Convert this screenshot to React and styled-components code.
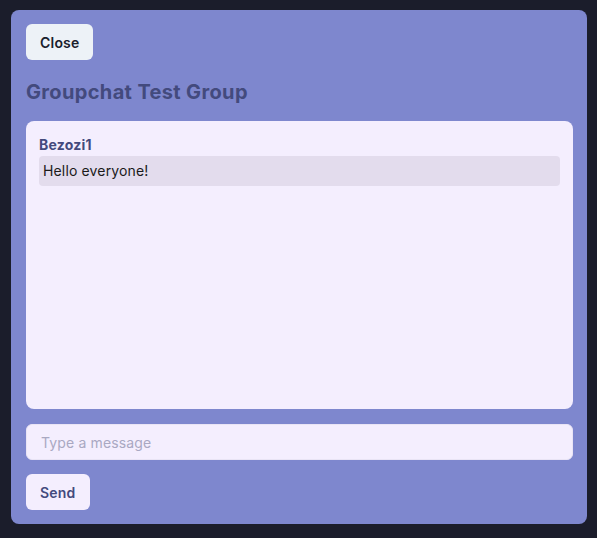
import React, { useState } from "react";
import styled, { createGlobalStyle } from "styled-components";

const GlobalStyle = createGlobalStyle`
  html, body {
    margin: 0;
    padding: 0;
    background: #1b1d2b;
    font-family: Inter, "Noto Sans", sans-serif;
  }
  * { box-sizing: border-box; }
`;

const Page = styled.div`
  padding: 10px 10px 14px 11px;
`;

const Panel = styled.div`
  background: #7e87ce;
  border-radius: 8px;
  padding: 14px 14px 14px 15px;
  display: flex;
  flex-direction: column;
  height: 514px;
`;

const Button = styled.button`
  align-self: flex-start;
  height: 36px;
  padding: 0 14px;
  border: none;
  border-radius: 6px;
  font-family: inherit;
  font-size: 14px;
  font-weight: 600;
  letter-spacing: 0.2px;
  cursor: pointer;
  background: ${(p) => (p.$light ? "#edf2f7" : "#f4eefe")};
  color: ${(p) => (p.$light ? "#1a202c" : "#434a7d")};
`;

const Title = styled.h2`
  margin: 18px 0 15px;
  font-size: 20px;
  line-height: 28px;
  font-weight: 700;
  letter-spacing: 0.35px;
  color: #434a7d;
`;

const ChatBox = styled.div`
  flex: 1;
  background: #f4eefe;
  border-radius: 8px;
  padding: 14px 13px;
  display: flex;
  flex-direction: column;
`;

const Author = styled.div`
  font-size: 14px;
  font-weight: 700;
  letter-spacing: 0.2px;
  color: #434a7d;
  line-height: 20px;
`;

const Message = styled.div`
  margin-top: 1px;
  background: #e3dced;
  border-radius: 4px;
  padding: 5px 4px;
  font-size: 14px;
  line-height: 20px;
  letter-spacing: 0.15px;
  color: #1a1a1a;
`;

const Input = styled.input`
  margin-top: 15px;
  height: 36px;
  border: 1px solid #e9e4f5;
  border-radius: 6px;
  background: #f4eefe;
  padding: 0 14px;
  font-family: inherit;
  font-size: 14px;
  letter-spacing: 0.15px;
  color: #1a202c;
  outline: none;
  &::placeholder {
    color: #a9a8c2;
  }
`;

const SendButton = styled(Button)`
  margin-top: 14px;
`;

export default function App() {
  const [text, setText] = useState("");
  return (
    <>
      <GlobalStyle />
      <Page>
        <Panel>
          <Button $light>Close</Button>
          <Title>Groupchat Test Group</Title>
          <ChatBox>
            <Author>Bezozi1</Author>
            <Message>Hello everyone!</Message>
          </ChatBox>
          <Input
            placeholder="Type a message"
            value={text}
            onChange={(e) => setText(e.target.value)}
          />
          <SendButton>Send</SendButton>
        </Panel>
      </Page>
    </>
  );
}
